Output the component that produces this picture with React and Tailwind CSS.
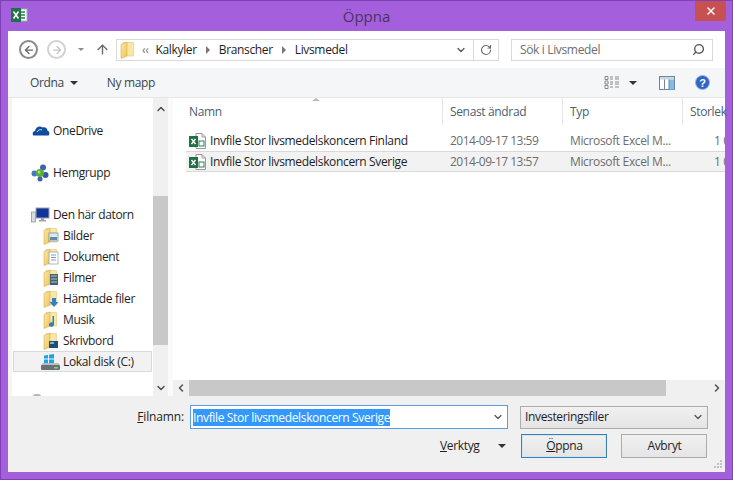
import { ArrowLeft, ArrowRight, ArrowUp, ChevronDown, ChevronLeft, ChevronRight, ChevronUp, RotateCw, Search, X } from 'lucide-react';

const font = { fontFamily: '"Open Sans", "Noto Sans", sans-serif' };

const ExcelLogo = () => (
  <svg width="18" height="16" viewBox="0 0 18 16">
    <rect x="7" y="2" width="10" height="12" fill="#fff" stroke="#8fb8a0" />
    <path d="M10 5h5M10 8h5M10 11h5" stroke="#2a7a4b" strokeWidth="1.5" />
    <rect x="1" y="1" width="10" height="14" fill="#1f7246" />
    <path d="M3.5 4.5 8.5 11.5M8.5 4.5 3.5 11.5" stroke="#fff" strokeWidth="1.6" />
  </svg>
);

const ExcelFile = () => (
  <svg width="19" height="18" viewBox="0 0 19 18" className="shrink-0">
    <path d="M8 1.5h6l3.5 3.5v11.5H8z" fill="#fff" stroke="#9a9a9a" />
    <path d="M14 1.5V5h3.5" fill="none" stroke="#9a9a9a" />
    <rect x="11" y="9" width="5" height="5" fill="#fff" stroke="#2f7d55" />
    <rect x="1" y="4" width="9" height="11" fill="#1f7246" />
    <path d="M3.5 7 7.5 12M7.5 7 3.5 12" stroke="#fff" strokeWidth="1.4" />
  </svg>
);

// yellow explorer folder, with an optional little picture on top
const Folder = ({ children, id }) => (
  <svg width="16" height="18" viewBox="0 0 16 18" className="shrink-0">
    <defs>
      <linearGradient id={id} x1="0" y1="0" x2="1" y2="1">
        <stop offset="0" stopColor="#fbe9a6" />
        <stop offset="1" stopColor="#eec35a" />
      </linearGradient>
    </defs>
    <path d="M3 1.500h10.500V15H3z" fill="#f9e7a8" stroke="#e0c67c" strokeWidth="0.6" />
    <path d="M1 3.500 7 1v14l-6 2.500z" fill={`url(#${id})`} stroke="#d8b04e" strokeWidth="0.6" />
    {children}
  </svg>
);

const pictures = {
  Bilder: (
    <>
      <rect x="6" y="6" width="9" height="8" fill="#dfeaf2" stroke="#6b8799" strokeWidth="0.7" />
      <rect x="7" y="10" width="7" height="3" fill="#5f8ba3" />
    </>
  ),
  Dokument: (
    <>
      <rect x="6" y="4" width="9" height="12" fill="#fff" stroke="#8f9aa5" strokeWidth="0.7" />
      <path d="M8 7h5M8 9.5h5M8 12h5" stroke="#7ca0c0" />
    </>
  ),
  Filmer: (
    <>
      <rect x="7" y="5" width="8" height="11" fill="#46626f" />
      <path d="M8 7h6M8 10h6M8 13h6" stroke="#a7c4cf" />
    </>
  ),
  Hamtade: <path d="M9 8h4v4h2.5L11 17l-4.500-5H9z" fill="#2f80c9" />,
  Musik: <path d="M11 5v8.500a2.500 2.200 0 1 1-1.500-2V5z" fill="#2f7fb8" />,
  Skrivbord: (
    <>
      <rect x="6" y="9" width="9" height="7" fill="#1e4f78" />
      <rect x="7" y="10" width="4" height="2" fill="#7fb2d6" />
    </>
  ),
};

const OneDrive = () => (
  <svg width="18" height="14" viewBox="0 0 18 14" className="shrink-0">
    <path d="M1.500 11.500C0 10 .5 7.500 3 7c.5-3.500 4.500-6 7.500-3.500 2.500-1 5 .5 4.800 3C17.500 7 18 10 16.500 11.500z" fill="#0f4c9c" />
    <path d="M5 8c1-2 3-3 5-2" fill="none" stroke="#fff" strokeWidth="0.8" />
  </svg>
);

const HomeGroup = () => (
  <svg width="18" height="18" viewBox="0 0 18 18" className="shrink-0">
    <circle cx="12" cy="3.500" r="3" fill="#3c63b0" />
    <circle cx="3.500" cy="9.500" r="3" fill="#4a74c4" />
    <circle cx="14.500" cy="11" r="3" fill="#3359a3" />
    <circle cx="9" cy="15" r="2.500" fill="#3c63b0" />
    <circle cx="9" cy="9" r="4" fill="#58ad36" />
    <circle cx="8" cy="8" r="1.500" fill="#a8dc7c" />
  </svg>
);

const Computer = () => (
  <svg width="19" height="16" viewBox="0 0 19 16" className="shrink-0">
    <rect x="0.500" y="5" width="4" height="10" fill="#d8dcdf" stroke="#7f8a8f" strokeWidth="0.7" />
    <rect x="5" y="1" width="13" height="10" fill="#12329c" stroke="#9aa6ae" />
    <path d="M10 11h3v2h2v1.500H8V13h2z" fill="#9aa6ae" />
  </svg>
);

const Drive = () => (
  <svg width="21" height="18" viewBox="0 0 21 18" className="shrink-0">
    <rect x="1" y="12" width="19" height="5" rx="1" fill="#6b7078" />
    <rect x="14" y="14" width="4" height="1.500" fill="#8bd35a" />
    <path d="M1 12l2-2h15l2 2z" fill="#b9bec4" />
    <path d="M4 2.500 8 2v3.500H4zM9 1.800 14 1v4.500H9zM4 6.500h4V10H4zM9 6.500h5v3.500H9z" fill="#19a5e8" />
  </svg>
);

const ViewIcon = () => (
  <svg width="16" height="15" viewBox="0 0 16 15">
    <path d="M1 1.500h3v3H1zM1 6h3v3H1zM1 10.500h3v3H1z" fill="#fff" stroke="#6d6d6d" strokeWidth="0.8" />
    <path d="M6 2h3M11 2h4M6 4h3M11 4h4M6 7h3M11 7h4M6 9h3M11 9h4M6 12h3M11 12h4" stroke="#8b8b8b" />
  </svg>
);

const PaneIcon = () => (
  <svg width="16" height="14" viewBox="0 0 16 14">
    <rect x="0.500" y="0.500" width="15" height="13" fill="#fff" stroke="#6e8796" />
    <rect x="1" y="1" width="14" height="2.500" fill="#c8d8e4" />
    <rect x="10" y="3.500" width="5" height="10" fill="#7fbcec" />
    <path d="M5.500 3.500v10M10 3.500v10" stroke="#6e8796" />
  </svg>
);

const HelpIcon = () => (
  <svg width="15" height="15" viewBox="0 0 15 15">
    <circle cx="7.500" cy="7.500" r="7" fill="#2f63c4" stroke="#9cb6e0" />
    <text x="7.500" y="11.500" textAnchor="middle" fontSize="11" fontWeight="700" fill="#fff" fontFamily="Liberation Sans, sans-serif">?</text>
  </svg>
);

const Grip = () => (
  <svg width="10" height="10" viewBox="0 0 10 10" className="absolute bottom-[3px] right-[2px]">
    <path d="M7 1h2v2H7zM4 4h2v2H4zM7 4h2v2H7zM1 7h2v2H1zM4 7h2v2H4zM7 7h2v2H7z" fill="#c4c4c4" />
  </svg>
);

const Caret = () => <div className="h-0 w-0 border-x-[4px] border-t-[4px] border-x-transparent border-t-[#333]" />;
const Crumb = () => <div className="mx-[9px] h-0 w-0 border-y-[4px] border-l-[4px] border-y-transparent border-l-[#777]" />;

const places = [
  { name: 'Bilder', icon: pictures.Bilder },
  { name: 'Dokument', icon: pictures.Dokument },
  { name: 'Filmer', icon: pictures.Filmer },
  { name: 'Hämtade filer', icon: pictures.Hamtade },
  { name: 'Musik', icon: pictures.Musik },
  { name: 'Skrivbord', icon: pictures.Skrivbord },
];

const files = [
  { name: 'Invfile Stor livsmedelskoncern Finland', date: '2014-09-17 13:59' },
  { name: 'Invfile Stor livsmedelskoncern Sverige', date: '2014-09-17 13:57', selected: true },
];

export default function App() {
  return (
    <div style={font} className="flex h-[480px] w-[733px] flex-col overflow-hidden border border-[#7f3fb5] bg-[#a45fdc] text-[12px] tracking-[-0.35px] text-[#1e1e1e]">
      <div className="flex h-[30px] shrink-0 items-start">
        <div className="ml-[9px] mt-[6px]"><ExcelLogo /></div>
        <div className="flex-1 pl-[10px] pt-[4px] text-center text-[15px] tracking-normal text-[#4a3560]">Öppna</div>
        <div className="mr-[6px] flex h-[20px] w-[31px] items-center justify-center bg-[#c75050]">
          <X size={12} strokeWidth={3} color="#fff" />
        </div>
      </div>

      <div className="mx-[7px] mb-[7px] flex min-h-0 flex-1 flex-col bg-white">
        {/* address row */}
        <div className="flex h-[37px] shrink-0 items-center">
          <div className="ml-[11px] flex h-[19px] w-[19px] items-center justify-center rounded-full border-2 border-[#8a8a8a]">
            <ArrowLeft size={12} strokeWidth={2.5} color="#666" />
          </div>
          <div className="ml-[9px] flex h-[19px] w-[19px] items-center justify-center rounded-full border-2 border-[#d2d2d2]">
            <ArrowRight size={12} strokeWidth={2.5} color="#c4c4c4" />
          </div>
          <div className="ml-[12px] h-0 w-0 border-x-[3px] border-t-[3px] border-x-transparent border-t-[#8a8a8a]" />
          <ArrowUp size={15} strokeWidth={2.2} color="#6a6a6a" className="ml-[11px]" />
          <div className="ml-[6px] flex h-[22px] w-[383px] items-center border border-[#d9d9d9] pl-[3px]">
            <Folder id="folder-path" />
            <span className="ml-[6px] text-[#777]">‹‹</span>
            <span className="ml-[7px]">Kalkyler</span>
            <Crumb />
            <span>Branscher</span>
            <Crumb />
            <span>Livsmedel</span>
            <div className="ml-auto flex h-full items-center">
              <ChevronDown size={12} strokeWidth={2.5} color="#555" className="mr-[6px]" />
              <div className="flex h-full w-[25px] items-center justify-center border-l border-[#d9d9d9]">
                <RotateCw size={12} strokeWidth={2.2} color="#666" />
              </div>
            </div>
          </div>
          <div className="ml-[12px] flex h-[22px] w-[202px] items-center justify-between border border-[#d9d9d9] pl-[8px] pr-[7px] text-[#6d6d6d]">
            <span>Sök i Livsmedel</span>
            <Search size={13} strokeWidth={2.5} color="#555" className="-scale-x-100" />
          </div>
        </div>

        {/* command bar */}
        <div className="flex h-[30px] shrink-0 items-center border-b border-[#e6e6e6] bg-[#f5f6f7] text-[#37474f]">
          <span className="ml-[22px]">Ordna</span>
          <div className="ml-[6px]"><Caret /></div>
          <span className="ml-[29px]">Ny mapp</span>
          <div className="ml-auto flex items-center">
            <ViewIcon />
            <div className="ml-[9px]"><Caret /></div>
            <div className="ml-[22px]"><PaneIcon /></div>
            <div className="ml-[20px] mr-[15px]"><HelpIcon /></div>
          </div>
        </div>

        {/* main area */}
        <div className="flex min-h-0 flex-1">
          <div className="flex w-[145px] shrink-0 bg-[#f5f5f5] pl-[4px]">
            <div className="flex-1 overflow-hidden bg-white pt-[22px]">
              <div className="flex h-[21px] items-center gap-[3px] pl-[20px]"><OneDrive /><span>OneDrive</span></div>
              <div className="mt-[21px] flex h-[21px] items-center gap-[4px] pl-[19px]"><HomeGroup /><span>Hemgrupp</span></div>
              <div className="mt-[21px] flex h-[21px] items-center gap-[3px] pl-[19px]"><Computer /><span>Den här datorn</span></div>
              {places.map((p) => (
                <div key={p.name} className="flex h-[21px] items-center gap-[4px] pl-[31px]">
                  <Folder id={`folder-${p.name.length}`}>{p.icon}</Folder>
                  <span>{p.name}</span>
                </div>
              ))}
              <div className="mx-[1px] flex h-[21px] items-center gap-[2px] border border-[#d9d9d9] bg-[#f2f2f2] pl-[26px]">
                <Drive /><span>Lokal disk (C:)</span>
              </div>
              <div className="ml-[21px] mt-[22px] h-[5px] w-[8px] rounded-full bg-[#b4b8bc]" />
            </div>
          </div>

          <div className="flex w-[15px] shrink-0 flex-col bg-[#f0f0f0]">
            <div className="flex h-[21px] items-center justify-center"><ChevronUp size={12} strokeWidth={3} color="#505050" /></div>
            <div className="mt-[77px] h-[149px] bg-[#c8c8c8]" />
            <div className="mt-auto flex h-[17px] items-center justify-center"><ChevronDown size={12} strokeWidth={3} color="#505050" /></div>
          </div>
          <div className="w-[5px] shrink-0 bg-[#fafafa]" />

          <div className="flex min-w-0 flex-1 flex-col">
            <div className="relative flex h-[27px] shrink-0 items-center text-[#4c6070]">
              <div className="absolute left-[139px] top-0 h-0 w-0 border-x-[4px] border-b-[3px] border-x-transparent border-b-[#aebccb]" />
              <div className="flex h-full w-[270px] shrink-0 items-center border-r border-[#e5e5e5] pl-[16px]">Namn</div>
              <div className="flex h-full w-[120px] shrink-0 items-center whitespace-nowrap border-r border-[#e5e5e5] pl-[7px]">Senast ändrad</div>
              <div className="flex h-full w-[120px] shrink-0 items-center whitespace-nowrap border-r border-[#e5e5e5] pl-[7px]">Typ</div>
              <div className="flex h-full min-w-0 flex-1 items-center pl-[7px]">Storlek</div>
            </div>
            <div className="min-h-0 flex-1 overflow-hidden pl-[13px] pt-[5px]">
              {files.map((f) => (
                <div key={f.name} className={`flex h-[21px] items-center overflow-hidden whitespace-nowrap border-y pl-[2px] ${f.selected ? 'border-[#d9d9d9] bg-[#f2f2f2]' : 'border-transparent'}`}>
                  <ExcelFile />
                  <span className="ml-[3px] w-[240px] shrink-0">{f.name}</span>
                  <span className="w-[120px] shrink-0 tracking-[-0.5px] text-[#6d6d6d]">{f.date}</span>
                  <span className="w-[144px] shrink-0 text-[#6d6d6d]">Microsoft Excel M...</span>
                  <span className="text-[#6d6d6d]">1 0</span>
                </div>
              ))}
            </div>
            <div className="flex h-[16px] shrink-0 items-center bg-[#f0f0f0]">
              <div className="flex w-[16px] justify-center"><ChevronLeft size={12} strokeWidth={3} color="#505050" /></div>
              <div className="h-full w-[477px] bg-[#c8c8c8]" />
              <div className="ml-auto flex w-[17px] justify-center"><ChevronRight size={12} strokeWidth={3} color="#505050" /></div>
            </div>
          </div>
        </div>

        {/* bottom panel */}
        <div className="relative flex h-[76px] shrink-0 flex-col bg-[#f0f0f0]">
          <div className="mt-[9px] flex h-[24px] items-center">
            <span className="ml-[125px] w-[51px] text-right tracking-[-0.15px]"><u>F</u>ilnamn:</span>
            <div className="ml-[6px] flex h-[24px] w-[318px] items-center border border-[#569de5] bg-white pl-[2px] pr-[3px]">
              <span className="bg-[#3399ff] leading-[17px] text-white">Invfile Stor livsmedelskoncern Sverige</span>
              <ChevronDown size={12} strokeWidth={2.5} color="#555" className="ml-auto" />
            </div>
            <div className="ml-[12px] flex h-[23px] w-[188px] items-center justify-between border border-[#acacac] bg-gradient-to-b from-[#f0f0f0] to-[#e5e5e5] pl-[4px] pr-[3px]">
              <span>Investeringsfiler</span>
              <ChevronDown size={12} strokeWidth={2.5} color="#555" />
            </div>
          </div>
          <div className="mt-[5px] flex h-[24px] items-center">
            <span className="ml-[432px]"><u>V</u>erktyg</span>
            <div className="ml-[19px]"><Caret /></div>
            <button className="ml-[15px] h-[24px] w-[86px] border border-[#3c7fb1] bg-gradient-to-b from-[#f0f0f0] to-[#e5e5e5] outline outline-1 -outline-offset-2 outline-[#cfe6f5]"><u>Ö</u>ppna</button>
            <button className="ml-[14px] h-[24px] w-[86px] border border-[#acacac] bg-gradient-to-b from-[#f0f0f0] to-[#e5e5e5]">Avbryt</button>
          </div>
          <Grip />
        </div>
      </div>
    </div>
  );
}
